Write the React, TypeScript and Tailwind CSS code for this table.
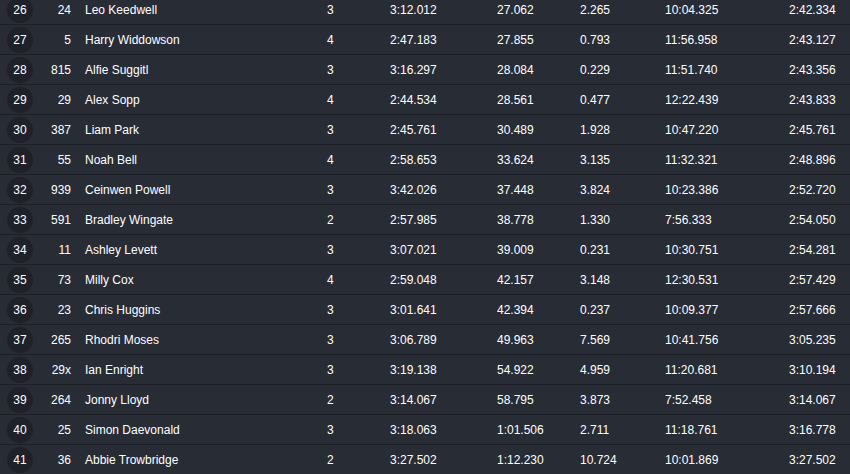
const rows: [number, string, string, number, string, string, string, string, string][] = [
  [26, "24", "Leo Keedwell", 3, "3:12.012", "27.062", "2.265", "10:04.325", "2:42.334"],
  [27, "5", "Harry Widdowson", 4, "2:47.183", "27.855", "0.793", "11:56.958", "2:43.127"],
  [28, "815", "Alfie Suggitl", 3, "3:16.297", "28.084", "0.229", "11:51.740", "2:43.356"],
  [29, "29", "Alex Sopp", 4, "2:44.534", "28.561", "0.477", "12:22.439", "2:43.833"],
  [30, "387", "Liam Park", 3, "2:45.761", "30.489", "1.928", "10:47.220", "2:45.761"],
  [31, "55", "Noah Bell", 4, "2:58.653", "33.624", "3.135", "11:32.321", "2:48.896"],
  [32, "939", "Ceinwen Powell", 3, "3:42.026", "37.448", "3.824", "10:23.386", "2:52.720"],
  [33, "591", "Bradley Wingate", 2, "2:57.985", "38.778", "1.330", "7:56.333", "2:54.050"],
  [34, "11", "Ashley Levett", 3, "3:07.021", "39.009", "0.231", "10:30.751", "2:54.281"],
  [35, "73", "Milly Cox", 4, "2:59.048", "42.157", "3.148", "12:30.531", "2:57.429"],
  [36, "23", "Chris Huggins", 3, "3:01.641", "42.394", "0.237", "10:09.377", "2:57.666"],
  [37, "265", "Rhodri Moses", 3, "3:06.789", "49.963", "7.569", "10:41.756", "3:05.235"],
  [38, "29x", "Ian Enright", 3, "3:19.138", "54.922", "4.959", "11:20.681", "3:10.194"],
  [39, "264", "Jonny Lloyd", 2, "3:14.067", "58.795", "3.873", "7:52.458", "3:14.067"],
  [40, "25", "Simon Daevonald", 3, "3:18.063", "1:01.506", "2.711", "11:18.761", "3:16.778"],
  [41, "36", "Abbie Trowbridge", 2, "3:27.502", "1:12.230", "10.724", "10:01.869", "3:27.502"],
];

export default function App() {
  return (
    <div className="h-screen overflow-hidden bg-[#282c35] text-white text-[12px] font-['Liberation_Sans',Arial,sans-serif]">
      <div className="-mt-[5px]">
        {rows.map(([pos, num, name, laps, time, gap, interval, total, best]) => (
          <div key={pos} className="flex items-center h-[30px] border-b border-[#1c1f25]">
            <div className="w-[40px] flex justify-center">
              <div className="w-[26px] h-[26px] rounded-full bg-[#1e2127] flex items-center justify-center">
                {pos}
              </div>
            </div>
            <div className="w-[31px] text-right">{num}</div>
            <div className="w-[256px] pl-[14px]">{name}</div>
            <div className="w-[63px]">{laps}</div>
            <div className="w-[107px]">{time}</div>
            <div className="w-[83px]">{gap}</div>
            <div className="w-[85px]">{interval}</div>
            <div className="w-[124px]">{total}</div>
            <div>{best}</div>
          </div>
        ))}
      </div>
    </div>
  );
}
